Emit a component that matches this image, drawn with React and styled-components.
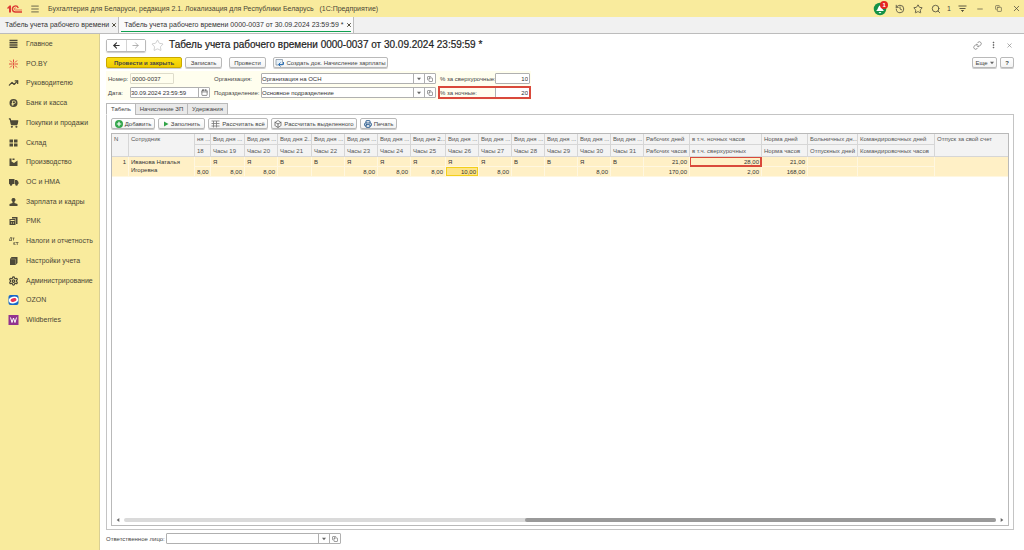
import React from 'react'
import styled, { createGlobalStyle, css } from 'styled-components'
import {
  Menu, X, History, Star, Search, Minus, Copy, Link, TrendingUp,
  ShoppingCart, Settings, Printer, Box, Calendar, ArrowLeft, ArrowRight
} from 'lucide-react'

const GlobalStyle = createGlobalStyle`
  * {
    box-sizing: border-box;
  }

  html, body, #root {
    height: 100%;
    margin: 0;
  }

  body {
    background: #fff;
    color: #444;
    font: 7px/10px "Liberation Sans", Arial, sans-serif;
  }

  button, input, select {
    color: inherit;
    font: inherit;
    margin: 0;
  }

  svg {
    display: block;
    flex: none;
  }
`

const Window = styled.div`
  display: flex;
  flex-direction: column;
  min-height: 100%;
`

const TitleBar = styled.header`
  align-items: center;
  background: #f9eb9d;
  display: flex;
  gap: 8px;
  height: 17px;
  padding: 0 3px 0 7px;
`

const AppTitle = styled.div`
  color: #4a4636;
  flex: 1;
  white-space: pre;
`

const BarButton = styled.button`
  background: none;
  border: 0;
  color: ${props => props.$color || '#4d4a3c'};
  display: flex;
  justify-content: center;
  padding: 0;
  width: ${props => props.$width || 10}px;
`

const Bell = styled.span`
  display: flex;
  position: relative;
`

const Badge = styled.span`
  background: #e52620;
  border-radius: 4px;
  color: #fff;
  font-size: 6px;
  font-weight: 700;
  height: 8px;
  left: 7px;
  line-height: 8px;
  position: absolute;
  text-align: center;
  top: -1px;
  width: 8px;
`

const WindowTabs = styled.div`
  background: #f1f1f1;
  border-bottom: 1px solid #bcbcbc;
  display: flex;
  height: 17px;
`

const WindowTab = styled.div`
  align-items: center;
  background: ${props => props.$active ? '#fafafa' : 'transparent'};
  border-right: 1px solid #bcbcbc;
  color: #333;
  display: flex;
  gap: 2px;
  padding: 0 1px 0 5px;
  position: relative;
  white-space: nowrap;

  ${props => props.$active && css`
    &::after {
      background: #10a050;
      bottom: 1px;
      content: '';
      height: 1px;
      left: 2px;
      position: absolute;
      right: 2px;
    }
  `}
`

const Body = styled.div`
  display: flex;
  flex: 1;
`

const Sidebar = styled.nav`
  background: #f9eb9d;
  border-right: 1px solid #d9cf94;
  flex: none;
  width: 100px;
`

const SectionList = styled.ul`
  display: grid;
  grid-auto-rows: 1fr;
  height: 296px;
  list-style: none;
  margin: 0;
  padding: 0;
`

const SectionLink = styled.a`
  align-items: center;
  color: #4a4636;
  display: flex;
  gap: 7px;
  height: 100%;
  padding-left: 8px;
  text-decoration: none;
  white-space: nowrap;

  svg {
    height: 10px;
    width: 11px;
  }
`

const Page = styled.main`
  display: flex;
  flex: 1;
  flex-direction: column;
  min-width: 0;
  padding: 4px 10px 6px 6px;
`

const Row = styled.div`
  align-items: center;
  display: flex;
  gap: ${props => props.$gap || 8}px;
`

const Spacer = styled.div`
  flex: 1;
`

const NavButtons = styled.div`
  border: 1px solid #b9b9b9;
  border-radius: 2px;
  box-shadow: 0 1px 1px #ccc;
  display: flex;
  height: 13px;
  width: 40px;

  button {
    align-items: center;
    background: #fff;
    border: 0;
    color: #333;
    display: flex;
    flex: 1;
    justify-content: center;
    padding: 0;
  }

  button + button {
    border-left: 1px solid #d4d4d4;
    color: #999;
  }
`

const PageTitle = styled.h1`
  color: #222;
  font-size: 10px;
  font-weight: 400;
  line-height: 14px;
  margin: 0;
  -webkit-text-stroke: 0.2px #222;
`

const Button = styled.button`
  align-items: center;
  background: linear-gradient(#fff, #f3f3f3);
  border: 1px solid #b9b9b9;
  border-radius: 2px;
  box-shadow: 0 1px 0 #ccc;
  color: #444;
  display: flex;
  font-size: 6px;
  gap: 2px;
  height: 11px;
  justify-content: center;
  line-height: 8px;
  padding: 0 2px;
  white-space: nowrap;
  width: ${props => props.$width}px;

  ${props => props.$primary && css`
    background: linear-gradient(#fbdf13, #efcb00);
    border-color: #c9a800;
    font-weight: 700;
  `}
`

const CommandBar = styled(Row)`
  margin-top: 5px;
`

const FormGrid = styled.form`
  align-items: center;
  align-self: flex-start;
  background: #fffeee;
  display: grid;
  font-size: 6px;
  grid-template-columns: 106px 226px auto;
  line-height: 8px;
  margin-top: 3px;
  padding: 1px 0;
  row-gap: 1px;
`

const Field = styled.div`
  align-items: center;
  border: 1px solid transparent;
  display: flex;
  height: 13px;
  padding-left: 1px;
  ${props => props.$marked && css`
    border-color: #d9493b;
    outline: 1px solid #d9493b;
    outline-offset: -2px;
  `}

  label {
    flex: none;
    white-space: nowrap;
    width: ${props => props.$label}px;
  }
`

const TextInput = styled.input`
  background: ${props => props.readOnly ? '#fffeee' : '#fff'};
  border: 1px solid ${props => props.readOnly ? '#dedccb' : '#b0b0b0'};
  border-radius: 1px;
  color: #333;
  height: 11px;
  min-width: 0;
  padding: 0 1px;
  text-align: ${props => props.$right ? 'right' : 'left'};
  width: ${props => props.$width}px;
`

const Combo = styled.div`
  background: #fff;
  border: 1px solid #b0b0b0;
  border-radius: 1px;
  display: grid;
  grid-template-columns: 1fr 11px 11px;
  height: 11px;
  width: ${props => props.$width}px;

  select, input {
    appearance: none;
    background: none;
    border: 0;
    color: #333;
    grid-area: 1 / 1 / 2 / 3;
    min-width: 0;
    padding: 0;
  }
`

const ComboMark = styled.span`
  align-items: center;
  border-left: 1px solid #b0b0b0;
  display: flex;
  grid-area: 1 / 2 / 2 / 3;
  justify-content: center;
  pointer-events: none;
`

const ComboButton = styled.button`
  align-items: center;
  background: none;
  border: 0;
  border-left: 1px solid #b0b0b0;
  display: flex;
  grid-area: 1 / 3 / 2 / 4;
  justify-content: center;
  padding: 0;
`

const DateBox = styled(Combo)`
  grid-template-columns: 1fr 0 11px;
`

const PageTabs = styled.div`
  display: flex;
  font-size: 6px;
  margin-top: 3px;
`

const PageTab = styled.button`
  background: ${props => props.$active ? '#fff' : '#e9e9e9'};
  border: 1px solid #b9b9b9;
  border-bottom-color: ${props => props.$active ? '#fff' : '#b9b9b9'};
  height: 12px;
  line-height: 8px;
  margin-bottom: -1px;
  margin-right: -1px;
  padding: 0;
  position: relative;
  width: ${props => props.$width}px;
`

const Panel = styled.section`
  border: 1px solid #c4c4c4;
  display: flex;
  flex: 1;
  flex-direction: column;
  padding: 3px 4px;
`

const GridBox = styled.div`
  border: 1px solid #b9b9b9;
  display: flex;
  flex: 1;
  flex-direction: column;
  justify-content: space-between;
  margin-top: 4px;
`

const Sheet = styled.table`
  border-collapse: separate;
  border-spacing: 0;
  font-size: 6px;
  line-height: 8px;
  table-layout: fixed;
  width: 100%;

  th, td {
    border-bottom: 1px solid #d6d6d6;
    border-right: 1px solid #d6d6d6;
    font-weight: 400;
    overflow: hidden;
    padding: 0 2px;
    text-align: left;
    white-space: nowrap;
  }

  th {
    background: #f3f3f3;
    color: #555;
    height: 11px;
  }

  tr + tr th {
    height: 12px;
  }

  th[rowspan], td[rowspan] {
    padding-top: 1px;
    vertical-align: top;
    white-space: normal;
  }

  td {
    background: #fff0c6;
    border-color: #fff7e0;
    color: #333;
    height: 10px;
  }

  tr > :last-child[rowspan] {
    border-right: 0;
  }
`

const NumCell = styled.td`
  &&& {
    text-align: right;
    ${props => props.$current && css`
      background: #fee486;
      box-shadow: inset 0 0 0 1px #f3cf1a;
    `}
    ${props => props.$marked && css`
      box-shadow: inset 0 0 0 1px #d9493b;
      outline: 1px solid #d9493b;
      outline-offset: -1px;
    `}
  }
`

const ScrollRow = styled.div`
  align-items: center;
  display: flex;
  gap: 4px;
  height: 10px;
  padding: 0 4px;
`

const ScrollTrack = styled.div`
  background: #dadada;
  border-radius: 2px;
  display: flex;
  flex: 1;
  height: 4px;
  justify-content: flex-end;
`

const ScrollThumb = styled.div`
  background: #9a9a9a;
  border-radius: 2px;
  width: 54%;
`

const Footer = styled(Row)`
  font-size: 6px;
  margin-top: 3px;
`

const Svg = ({ children, w = 11, h = 10, box = '0 0 22 20', ...rest }) => (
  <svg width={w} height={h} viewBox={box} aria-hidden='true' {...rest}>{children}</svg>
)

const Arrow = ({ dir = 'down', size = 4 }) => {
  const points = { down: '0,1 6,1 3,5', left: '5,0 5,6 1,3', right: '1,0 1,6 5,3' }
  return <Svg w={size} h={size} box='0 0 6 6'><polygon points={points[dir]} fill='#666' /></Svg>
}

const dark = '#4d4938'

const Logo = () => (
  <Svg w={15} h={10} box='0 0 30 20'>
    <path d='M0 8L5 3H8V17H4V8L2 10Z' fill='#dc3a33' />
    <g fill='none' stroke='#dc3a33'>
      <path d='M22.500 8A6 6 0 1 0 17 16H30' strokeWidth='2.600' />
      <path d='M18.500 9A2 2 0 1 0 17 12H30' strokeWidth='1.400' />
    </g>
  </Svg>
)

const MainIcon = () => (
  <Svg><path d='M3 3H19M3 7.500H19M3 12H19M3 16.500H19' stroke={dark} strokeWidth='2.600' /></Svg>
)

const StarburstIcon = () => (
  <Svg>
    <path d='M11 1V7M11 13V19M2 10H8M14 10H20M4 3L8 7M18 3L14 7M4 17L8 13M18 17L14 13' stroke='#e04a3c' strokeWidth='2' />
    <circle cx='11' cy='10' r='2' fill='#e04a3c' />
  </Svg>
)

const CoinIcon = () => (
  <Svg>
    <circle cx='11' cy='10' r='8' fill={dark} />
    <path d='M9 15V6H12.500A2.500 2.500 0 0 1 12.500 11H7M7 13.500H12' stroke='#f9eb9d' strokeWidth='1.600' fill='none' />
  </Svg>
)

const StockIcon = () => (
  <Svg><path d='M3 3H10V9H3ZM12 3H19V9H12ZM3 11H10V17H3ZM12 11H19V17H12Z' fill={dark} /></Svg>
)

const FactoryIcon = () => (
  <Svg><path d='M3 18V3H7V9L12 12L19 7V18ZM9 3H13V6H9Z' fill={dark} /></Svg>
)

const TruckIcon = () => (
  <Svg>
    <path d='M2 4H13V14H2ZM14 6H18L21 10V14H14Z' fill={dark} />
    <circle cx='6' cy='15' r='2.500' fill={dark} />
    <circle cx='17' cy='15' r='2.500' fill={dark} />
  </Svg>
)

const PersonIcon = () => (
  <Svg><path d='M11 2A4 4 0 0 1 13 9.500V12L19 14V18H3V14L9 12V9.500A4 4 0 0 1 11 2Z' fill={dark} /></Svg>
)

const RegisterIcon = () => (
  <Svg>
    <path d='M3 6H15V18H3ZM8 2H19V16H16V5H8Z' fill={dark} />
    <path d='M5 8H13V10H5ZM6 13H8V15H6ZM10 13H12V15H10Z' fill='#f9eb9d' />
  </Svg>
)

const TaxIcon = () => (
  <Svg>
    <path d='M2 9H8M3 8L5 3H7V8M9 4H13M11 4V9M12 12V18M12 15L15 12M12 15L15 18M16 13H21M18.500 13V18' fill='none' stroke={dark} strokeWidth='1.400' />
  </Svg>
)

const BooksIcon = () => (
  <Svg>
    <path d='M4 6L7 2H19V14L15 18H4Z' fill={dark} />
    <path d='M5 6H15V17' fill='none' stroke='#b5ab78' strokeWidth='1' />
  </Svg>
)

const OzonIcon = () => (
  <Svg>
    <rect x='1' width='20' height='20' rx='4' fill='#1767c9' />
    <ellipse cx='11' cy='10' rx='9.500' ry='6.500' fill='#fff' transform='rotate(-15 11 10)' />
    <ellipse cx='11' cy='10' rx='6' ry='3.500' fill='#e73354' transform='rotate(-15 11 10)' />
  </Svg>
)

const WildberriesIcon = () => (
  <Svg>
    <rect x='1' width='20' height='20' fill='#92338f' />
    <path d='M5 5L8 15L11 6L14 15L17 5' fill='none' stroke='#fff' strokeWidth='2' />
  </Svg>
)

const BellIcon = () => (
  <Svg w={14} h={14} box='0 0 28 28'>
    <circle cx='14' cy='14' r='12.500' fill='#139247' />
    <path d='M6 18C10 16 10 8 14 7C18 8 18 15 22 18Z' fill='#fff' />
    <path d='M11 20H17L14 23Z' fill='#fff' />
  </Svg>
)

const AddIcon = () => (
  <Svg w={8} h={8} box='0 0 16 16'>
    <circle cx='8' cy='8' r='8' fill='#33a64b' />
    <path d='M8 3.500V12.500M3.500 8H12.500' stroke='#fff' strokeWidth='2.400' />
  </Svg>
)

const PlayIcon = () => (
  <Svg w={6} h={6} box='0 0 12 12'><path d='M2 1L11 6L2 11Z' fill='#2fa347' /></Svg>
)

const CalcIcon = () => (
  <Svg w={9} h={8} box='0 0 18 16'>
    <path d='M1 2H17M1 7H17M1 12H17M5 2V15M11 2V15' fill='none' stroke='#777' strokeWidth='1.600' />
  </Svg>
)

const DocIcon = () => (
  <Svg w={9} h={8} box='0 0 18 16'>
    <path d='M2 1H15V12H2Z' fill='#e4eef7' stroke='#7c8d9c' strokeWidth='1.400' />
    <path d='M17 6V11H8M11 7L7 11L11 15' fill='none' stroke='#2d72b8' strokeWidth='2' />
  </Svg>
)

const sections = [
  ['Главное', <MainIcon />],
  ['PO.BY', <StarburstIcon />],
  ['Руководителю', <TrendingUp strokeWidth={3} />],
  ['Банк и касса', <CoinIcon />],
  ['Покупки и продажи', <ShoppingCart fill={dark} strokeWidth={3} />],
  ['Склад', <StockIcon />],
  ['Производство', <FactoryIcon />],
  ['ОС и НМА', <TruckIcon />],
  ['Зарплата и кадры', <PersonIcon />],
  ['РМК', <RegisterIcon />],
  ['Налоги и отчетность', <TaxIcon />],
  ['Настройки учета', <BooksIcon />],
  ['Администрирование', <Settings strokeWidth={3} />],
  ['OZON', <OzonIcon />],
  ['Wildberries', <WildberriesIcon />]
]

const days = [
  { day: '18', title: 'ня ...', hours: '8,00', width: 16 },
  { day: 'Часы 19', kind: 'Я', hours: '8,00', width: 34 },
  { day: 'Часы 20', kind: 'Я', hours: '8,00', width: 33 },
  { day: 'Часы 21', title: 'Вид дня 2...', kind: 'В', width: 34 },
  { day: 'Часы 22', kind: 'В', width: 33 },
  { day: 'Часы 23', kind: 'Я', hours: '8,00', width: 33 },
  { day: 'Часы 24', kind: 'Я', hours: '8,00', width: 33 },
  { day: 'Часы 25', title: 'Вид дня 2...', kind: 'Я', hours: '8,00', width: 35 },
  { day: 'Часы 26', kind: 'Я', hours: '10,00', width: 33, current: true },
  { day: 'Часы 27', kind: 'Я', hours: '8,00', width: 33 },
  { day: 'Часы 28', kind: 'В', width: 33 },
  { day: 'Часы 29', kind: 'В', width: 33 },
  { day: 'Часы 30', kind: 'Я', hours: '8,00', width: 33 },
  { day: 'Часы 31', kind: 'В', width: 33 }
]

const totals = [
  { top: 'Рабочих дней', bottom: 'Рабочих часов', values: ['21,00', '170,00'], width: 46 },
  { top: 'в т.ч. ночных часов', bottom: 'в т.ч. сверхурочных', values: ['28,00', '2,00'], width: 72, marked: true },
  { top: 'Норма дней', bottom: 'Норма часов', values: ['21,00', '168,00'], width: 46 },
  { top: 'Больничных дн...', bottom: 'Отпускных дней', values: ['', ''], width: 50 },
  { top: 'Командировочных дней', bottom: 'Командировочных часов', values: ['', ''], width: 77 }
]

function Select ({ id, value, width }) {
  return (
    <Combo $width={width}>
      <select id={id} defaultValue={value}><option>{value}</option></select>
      <ComboMark><Arrow /></ComboMark>
      <ComboButton type='button' aria-label='Открыть'><Copy size={6} /></ComboButton>
    </Combo>
  )
}

function Timesheet () {
  return (
    <Sheet>
      <colgroup>
        <col style={{ width: 17 }} />
        <col style={{ width: 66 }} />
        {days.map(d => <col key={d.day} style={{ width: d.width }} />)}
        {totals.map(t => <col key={t.top} style={{ width: t.width }} />)}
        <col />
      </colgroup>
      <thead>
        <tr>
          <th rowSpan={2}>N</th>
          <th rowSpan={2}>Сотрудник</th>
          {days.map(d => <th key={d.day}>{d.title || 'Вид дня ...'}</th>)}
          {totals.map(t => <th key={t.top}>{t.top}</th>)}
          <th rowSpan={2}>Отпуск за свой счет</th>
        </tr>
        <tr>
          {days.map(d => <th key={d.day}>{d.day}</th>)}
          {totals.map(t => <th key={t.top}>{t.bottom}</th>)}
        </tr>
      </thead>
      <tbody>
        <tr>
          <NumCell rowSpan={2}>1</NumCell>
          <td rowSpan={2}>Иванова Наталья Игоревна</td>
          {days.map(d => <td key={d.day}>{d.kind}</td>)}
          {totals.map(t => <NumCell key={t.top} $marked={t.marked}>{t.values[0]}</NumCell>)}
          <td rowSpan={2} />
        </tr>
        <tr>
          {days.map(d => <NumCell key={d.day} $current={d.current}>{d.hours}</NumCell>)}
          {totals.map(t => <NumCell key={t.top}>{t.values[1]}</NumCell>)}
        </tr>
      </tbody>
    </Sheet>
  )
}

export default function App () {
  return (
    <Window>
      <GlobalStyle />
      <TitleBar>
        <Logo />
        <BarButton aria-label='Меню'><Menu size={10} strokeWidth={2} /></BarButton>
        <AppTitle>Бухгалтерия для Беларуси, редакция 2.1. Локализация для Республики Беларусь   (1С:Предприятие)</AppTitle>
        <Bell><BellIcon /><Badge>1</Badge></Bell>
        <BarButton aria-label='История'><History size={10} /></BarButton>
        <BarButton aria-label='Избранное'><Star size={10} /></BarButton>
        <Row $gap={6}>
          <BarButton aria-label='Поиск'><Search size={10} /></BarButton>
          <span>1</span>
          <BarButton aria-label='Настройки'>
            <Svg w={9} h={9} box='0 0 18 18'><path d='M1 4H17M3 9H15M7 13H11L9 15Z' stroke={dark} strokeWidth='1.800' /></Svg>
          </BarButton>
        </Row>
        <BarButton aria-label='Свернуть'><Minus size={8} /></BarButton>
        <BarButton aria-label='Восстановить'><Copy size={7} /></BarButton>
        <BarButton aria-label='Закрыть'><X size={9} /></BarButton>
      </TitleBar>
      <WindowTabs>
        <WindowTab>Табель учета рабочего времени<BarButton $width={6} aria-label='Закрыть'><X size={6} strokeWidth={4} /></BarButton></WindowTab>
        <WindowTab $active>Табель учета рабочего времени 0000-0037 от 30.09.2024 23:59:59 *<BarButton $width={6} aria-label='Закрыть'><X size={6} strokeWidth={4} /></BarButton></WindowTab>
      </WindowTabs>
      <Body>
        <Sidebar>
          <SectionList>
            {sections.map(([name, icon]) => (
              <li key={name}><SectionLink href='#'>{icon}{name}</SectionLink></li>
            ))}
          </SectionList>
        </Sidebar>
        <Page>
          <Row $gap={5}>
            <NavButtons>
              <button aria-label='Назад'><ArrowLeft size={9} strokeWidth={3} /></button>
              <button aria-label='Вперед'><ArrowRight size={9} strokeWidth={2} /></button>
            </NavButtons>
            <Star size={13} color='#aaa' strokeWidth={1} />
            <PageTitle>Табель учета рабочего времени 0000-0037 от 30.09.2024 23:59:59 *</PageTitle>
            <Spacer />
            <Row $gap={6}>
              <BarButton $color='#777' aria-label='Ссылка'><Link size={9} /></BarButton>
              <BarButton $color='#777' aria-label='Действия'>
                <Svg w={3} h={8} box='0 0 6 16'><path d='M2 2H4V4H2ZM2 7H4V9H2ZM2 12H4V14H2Z' fill='#666' stroke='#666' /></Svg>
              </BarButton>
              <BarButton $color='#777' aria-label='Закрыть'><X size={7} /></BarButton>
            </Row>
          </Row>
          <CommandBar $gap={7}>
            <Row $gap={3}>
              <Button $width={76} $primary>Провести и закрыть</Button>
              <Button $width={37}>Записать</Button>
            </Row>
            <Button $width={37}>Провести</Button>
            <Button $width={115}><DocIcon />Создать док. Начисление зарплаты</Button>
            <Spacer />
            <Row $gap={3}>
              <Button $width={25}>Еще <Arrow /></Button>
              <Button $width={14}><b>?</b></Button>
            </Row>
          </CommandBar>
          <FormGrid>
            <Field $label={22}>
              <label htmlFor='number'>Номер:</label>
              <TextInput id='number' defaultValue='0000-0037' readOnly $width={44} />
            </Field>
            <Field $label={47}>
              <label htmlFor='org'>Организация:</label>
              <Select id='org' value='Организация на ОСН' width={175} />
            </Field>
            <Field $label={55}>
              <label htmlFor='overtime'>% за сверхурочные:</label>
              <TextInput id='overtime' defaultValue='10' $right $width={35} />
            </Field>
            <Field $label={22}>
              <label htmlFor='date'>Дата:</label>
              <DateBox $width={80}>
                <input id='date' defaultValue='30.09.2024 23:59:59' />
                <ComboButton type='button' aria-label='Выбрать дату'><Calendar size={7} /></ComboButton>
              </DateBox>
            </Field>
            <Field $label={47}>
              <label htmlFor='department'>Подразделение:</label>
              <Select id='department' value='Основное подразделение' width={175} />
            </Field>
            <Field $label={55} $marked>
              <label htmlFor='night'>% за ночные:</label>
              <TextInput id='night' defaultValue='20' $right $width={35} />
            </Field>
          </FormGrid>
          <PageTabs>
            <PageTab $active $width={30}>Табель</PageTab>
            <PageTab $width={53}>Начисление ЗП</PageTab>
            <PageTab $width={41}>Удержания</PageTab>
          </PageTabs>
          <Panel>
            <Row $gap={3}>
              <Button $width={44}><AddIcon />Добавить</Button>
              <Button $width={47}><PlayIcon />Заполнить</Button>
              <Button $width={60}><CalcIcon />Рассчитать всё</Button>
              <Button $width={86}><Box size={8} />Рассчитать выделенного</Button>
              <Button $width={37}><Printer size={8} color='#2f5f91' strokeWidth={3} />Печать</Button>
            </Row>
            <GridBox>
              <Timesheet />
              <ScrollRow>
                <Arrow dir='left' />
                <ScrollTrack><ScrollThumb /></ScrollTrack>
                <Arrow dir='right' />
              </ScrollRow>
            </GridBox>
          </Panel>
          <Footer $gap={1}>
            <label htmlFor='responsible'>Ответственное лицо:</label>
            <Select id='responsible' value='' width={175} />
          </Footer>
        </Page>
      </Body>
    </Window>
  )
}
